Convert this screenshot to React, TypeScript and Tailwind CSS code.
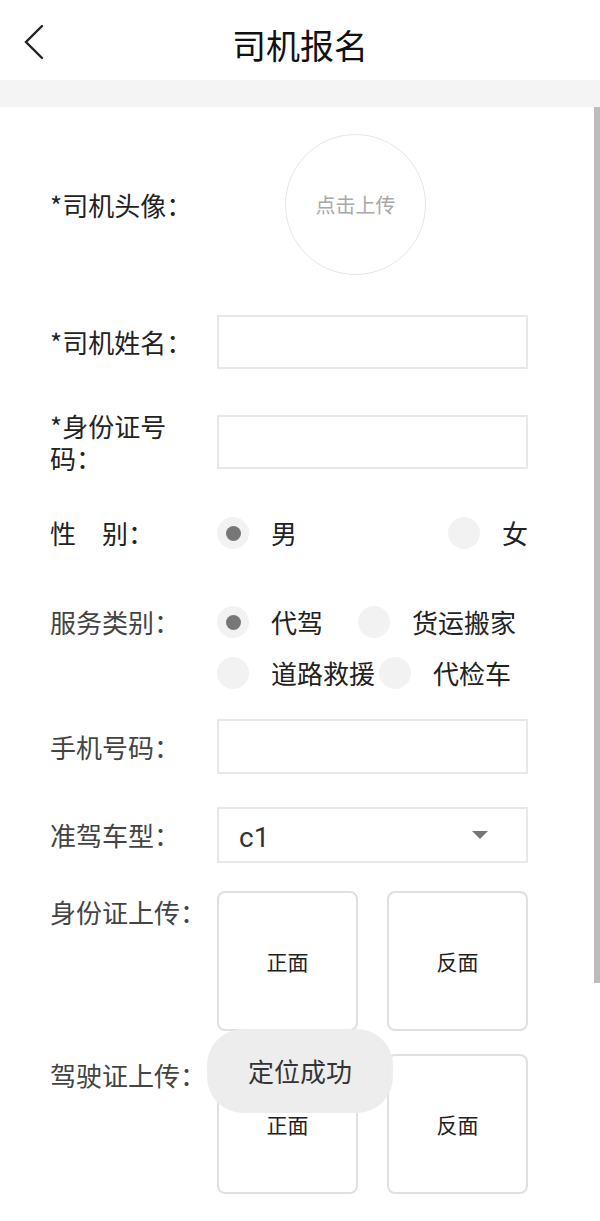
import React from 'react'

const FONT = "font-['Noto_Sans_CJK_SC',sans-serif]"

function Radio({ checked }: { checked?: boolean }) {
  return (
    <div className="w-8 h-8 rounded-full bg-[#f2f2f2] flex items-center justify-center shrink-0">
      {checked && <div className="w-[15px] h-[15px] rounded-full bg-[#777]" />}
    </div>
  )
}

function Row({ label, children, top = 'center' }: { label: React.ReactNode; children: React.ReactNode; top?: 'center' | 'start' }) {
  return (
    <div className={`flex ${top === 'center' ? 'items-center' : 'items-start'}`}>
      <div className="w-[167px] shrink-0 text-[26px] leading-[32px] whitespace-nowrap">{label}</div>
      {children}
    </div>
  )
}

function UploadBox({ text }: { text: string }) {
  return (
    <div className="w-[141px] h-[140px] border-2 border-[#e0e0e0] rounded-[8px] flex items-center justify-center text-[21px] leading-[28px] text-[#222]">
      {text}
    </div>
  )
}

export default function App() {
  return (
    <div className={`relative w-[600px] h-[1221px] overflow-hidden bg-white leading-[32px] ${FONT}`}>
      {/* Header */}
      <div className="h-[80px] grid grid-cols-[80px_1fr_80px] items-start">
        <div className="pl-[24px] pt-[24px]">
          <svg width="20" height="36" viewBox="0 0 20 36" fill="none">
            <polyline points="18,2 2,18 18,34" stroke="#222" strokeWidth="2.4" strokeLinecap="round" strokeLinejoin="miter" />
          </svg>
        </div>
        <div className="text-center text-[34px] leading-[40px] pt-[25px] font-normal text-[#111]">司机报名</div>
        <div />
      </div>
      <div className="h-[27px] bg-[#f4f4f4]" />

      {/* Form */}
      <div className="pl-[50px] pt-[27px] text-[#222]">
        <Row label="*司机头像：">
          <div className="ml-[68px] w-[141px] h-[141px] rounded-full border border-[#e6e6e6] flex items-center justify-center text-[20px] leading-[28px] text-[#a8a8a8]">
            点击上传
          </div>
        </Row>

        <div className="mt-[40px]">
          <Row label="*司机姓名：">
            <div className="w-[311px] h-[54px] border-2 border-[#e8e8e8]" />
          </Row>
        </div>

        <div className="mt-[46px]">
          <Row
            label={
              <div className="h-[54px] flex flex-col justify-center">
                <div className="h-[32px]">*身份证号</div>
                <div className="h-[32px]">码：</div>
              </div>
            }
          >
            <div className="w-[311px] h-[54px] border-2 border-[#e8e8e8]" />
          </Row>
        </div>

        <div className="mt-[48px]">
          <Row label="性　别：">
            <div className="w-[311px] flex items-center justify-between text-[26px] leading-[32px] text-[#222]">
              <div className="flex items-center">
                <Radio checked />
                <span className="ml-[22px]">男</span>
              </div>
              <div className="flex items-center">
                <Radio />
                <span className="ml-[22px]">女</span>
              </div>
            </div>
          </Row>
        </div>

        <div className="mt-[57px]">
          <Row label={<span className="text-[#444]">服务类别：</span>} top="start">
            <div className="flex flex-col gap-[19px] text-[26px] leading-[32px] text-[#222]">
              <div className="flex items-center h-[32px]">
                <Radio checked />
                <span className="ml-[22px] mr-[35px]">代驾</span>
                <Radio />
                <span className="ml-[22px]">货运搬家</span>
              </div>
              <div className="flex items-center h-[32px]">
                <Radio />
                <span className="ml-[22px] mr-[4px]">道路救援</span>
                <Radio />
                <span className="ml-[22px]">代检车</span>
              </div>
            </div>
          </Row>
        </div>

        <div className="mt-[30px]">
          <Row label={<span className="text-[#444]">手机号码：</span>}>
            <div className="w-[311px] h-[55px] border-2 border-[#e8e8e8]" />
          </Row>
        </div>

        <div className="mt-[33px]">
          <Row label={<span className="text-[#444]">准驾车型：</span>}>
            <div className="w-[311px] h-[56px] border-2 border-[#e8e8e8] flex items-center justify-between pl-[20px] pr-[38px]">
              <span className="font-['Roboto',sans-serif] text-[28px] leading-[32px] pt-[6px] text-[#333]">c1</span>
              <svg width="16" height="8" viewBox="0 0 16 8">
                <polygon points="0,0 16,0 8,8" fill="#777" />
              </svg>
            </div>
          </Row>
        </div>

        <div className="mt-[28px]">
          <Row label={<span className="block pt-[5px] text-[#444]">身份证上传：</span>} top="start">
            <div className="w-[311px] flex justify-between">
              <UploadBox text="正面" />
              <UploadBox text="反面" />
            </div>
          </Row>
        </div>

        <div className="mt-[23px]">
          <Row label={<span className="block pt-[5px] text-[#444]">驾驶证上传：</span>} top="start">
            <div className="w-[311px] flex justify-between">
              <UploadBox text="正面" />
              <UploadBox text="反面" />
            </div>
          </Row>
        </div>
      </div>

      {/* Toast */}
      <div className="absolute left-[207px] top-[1029px] w-[186px] h-[84px] rounded-[36px] bg-[#ececec]/95 flex items-center justify-center text-[26px] text-[#333]">
        定位成功
      </div>

      {/* Scrollbar */}
      <div className="absolute right-0 top-[107px] w-[6px] h-[876px] bg-[#bcbcbc]" />
    </div>
  )
}
